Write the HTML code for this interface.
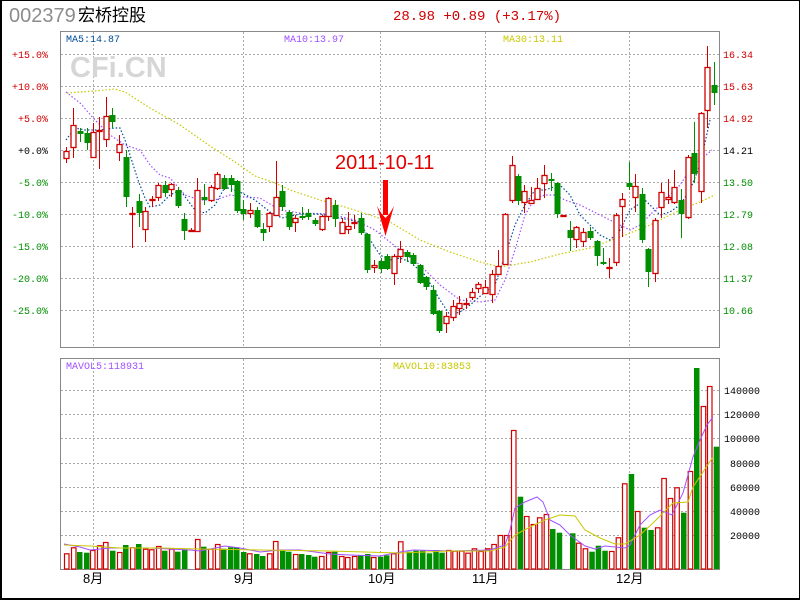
<!DOCTYPE html>
<html><head><meta charset="utf-8"><style>
html,body{margin:0;padding:0;background:#fff}
#w{position:relative;width:800px;height:600px;overflow:hidden}
</style></head><body><div id="w">
<svg id="s" width="800" height="600" xmlns="http://www.w3.org/2000/svg" font-family="Liberation Mono, monospace" font-size="10">
<rect x="0.5" y="0.5" width="799" height="599" fill="#fff" stroke="#000" stroke-width="1"/>
<line x1="1" y1="0" x2="1" y2="600" stroke="#000" stroke-width="2"/>
<line x1="0" y1="599" x2="800" y2="599" stroke="#000" stroke-width="2"/>
<text x="9" y="22" font-family="Liberation Sans, sans-serif" font-size="20" fill="#8c8c8c">002379</text>
<text x="78" y="21" font-family="Liberation Sans, 'Noto Sans CJK SC', sans-serif" font-size="17" fill="#000">宏桥控股</text>
<text x="393" y="20" font-size="14" fill="#d00000">28.98 +0.89 (+3.17%)</text>
<g id="grid" stroke="#aaa" stroke-dasharray="2,2" stroke-width="1"></g>
<text x="70" y="77" font-family="Liberation Sans, sans-serif" font-weight="bold" font-size="29" fill="#d6d6d6">CFi.CN</text>
<rect x="60.5" y="31.5" width="659" height="316" fill="none" stroke="#888"/>
<rect x="60.5" y="358.5" width="659" height="211" fill="none" stroke="#888"/>
<text x="66" y="42" fill="#004c99">MA5:14.87</text>
<text x="284" y="42" fill="#a050ff">MA10:13.97</text>
<text x="503" y="42" fill="#c8c800">MA30:13.11</text>
<text x="66" y="369" fill="#a050ff">MAVOL5:118931</text>
<text x="393" y="369" fill="#c8c800">MAVOL10:83853</text>
<g id="lab" text-anchor="end"></g>
<g id="rl"></g>
<g id="ma"></g>
<g id="cd"></g>
<g id="vb"></g>
<text x="335" y="169" font-family="Liberation Sans, sans-serif" font-size="20" fill="#e00000">2011-10-11</text>
<rect x="383" y="180" width="5" height="35" fill="#f00"/>
<polygon points="377,206 385.5,236 394,206 390,213 385.5,218 381,213" fill="#f00"/>
<g font-family="Liberation Sans, 'Noto Sans CJK SC', sans-serif" font-size="13" fill="#000">
<text x="83" y="583">8月</text><text x="234" y="583">9月</text><text x="368" y="583">10月</text><text x="472" y="583">11月</text><text x="616" y="583">12月</text></g>
</svg>
<script>
var NS="http://www.w3.org/2000/svg";
function el(p,t,a,tx){var e=document.createElementNS(NS,t);for(var k in a)e.setAttribute(k,a[k]);if(tx)e.textContent=tx;document.getElementById(p).appendChild(e);return e;}
[54,86,118,150,182,214,246,278,310].forEach(function(y){el('grid','line',{x1:61,x2:719,y1:y+.5,y2:y+.5});});
[93,243,380,485,629].forEach(function(x){el('grid','line',{x1:x+.5,x2:x+.5,y1:32,y2:347});el('grid','line',{x1:x+.5,x2:x+.5,y1:359,y2:569});});
[390,414,438,463,487,511,535].forEach(function(y){el('grid','line',{x1:61,x2:719,y1:y+.5,y2:y+.5});});
var L=[["+15.0%","#d00000"],["+10.0%","#d00000"],["+5.0%","#d00000"],["+0.0%","#000"],["-5.0%","#008f00"],["-10.0%","#008f00"],["-15.0%","#008f00"],["-20.0%","#008f00"],["-25.0%","#008f00"]];
var R=[["16.34","#d00000"],["15.63","#d00000"],["14.92","#d00000"],["14.21","#000"],["13.50","#008f00"],["12.79","#008f00"],["12.08","#008f00"],["11.37","#008f00"],["10.66","#008f00"]];
L.forEach(function(l,i){var y=54+i*32;el('lab','text',{x:48,y:y+4,fill:l[1]},l[0]);el('rl','text',{x:723,y:y+4,fill:R[i][1]},R[i][0]);});
["140000","120000","100000","80000","60000","40000","20000"].forEach(function(t,i){el('rl','text',{x:760,y:[390,414,438,463,487,511,535][i]+4,fill:'#000','text-anchor':'end'},t);});
function pl(pts,c,dash,w){el('ma','polyline',{points:pts.map(function(p){return p.join(',')}).join(' '),fill:'none',stroke:c,'stroke-width':w||1.2,'stroke-dasharray':dash||''});}
pl([[67,93],[95,91],[115,89],[125,92],[150,108],[180,125],[210,146],[235,162],[255,176],[275,183],[290,190],[320,200],[345,207],[370,215],[390,222],[420,240],[450,252],[480,262],[500,267],[530,262],[560,254],[590,248],[620,237],[650,225],[680,210],[700,202],[715,195]],'#c8c800','1.5,2');
pl([[66,92],[80,103],[95,120],[110,135],[125,145],[140,150],[150,165],[160,175],[170,178],[185,195],[200,200],[215,200],[230,195],[245,197],[260,198],[280,210],[300,213],[330,214],[355,220],[375,230],[400,250],[420,265],[440,285],[460,300],[480,302],[495,300],[505,280],[515,250],[525,215],[535,198],[545,195],[555,195],[565,200],[580,205],[600,215],[620,225],[630,230],[640,225],[650,215],[665,200],[680,185],[690,170],[700,160],[712,150]],'#a050ff','1.5,2');
pl([[66,140],[75,128],[85,130],[100,130],[115,128],[120,128],[125,140],[130,155],[138,180],[145,198],[150,207],[160,205],[170,195],[180,190],[195,210],[205,213],[215,205],[225,187],[240,192],[255,200],[270,212],[282,218],[300,214],[320,214],[340,218],[360,222],[367,235],[380,255],[390,260],[400,258],[410,262],[425,275],[440,300],[450,315],[460,312],[470,305],[485,292],[495,285],[500,270],[507,250],[515,225],[525,205],[535,190],[545,190],[560,185],[570,195],[580,215],[590,225],[600,235],[610,240],[620,230],[630,210],[645,200],[660,215],[670,212],[680,205],[690,190],[700,165],[710,120]],'#004c99','1.5,2');
var C=[[66,151,158,147,163,'r'],[73,125,147,108,158,'r'],[80,131,134,128,142,'g'],[87,133,143,128,150,'g'],[93,132,157,123,157,'r'],[99,130,131,117,169,'r'],[106,116,139,97,147,'r'],[112,115,122,108,128,'g'],[119,144,152,135,161,'r'],[126,157,197,150,207,'g'],[132,213,214,207,248,'r'],[139,201,213,194,227,'g'],[145,211,229,207,242,'r'],[152,199,200,196,207,'r'],[158,185,197,183,201,'r'],[165,185,193,181,197,'g'],[171,184,189,183,197,'r'],[178,190,206,187,208,'g'],[184,219,231,213,240,'g'],[191,230,231,228,232,'r'],[197,190,231,178,231,'r'],[204,197,200,184,205,'g'],[211,187,200,185,202,'r'],[217,174,188,172,190,'r'],[224,178,189,175,190,'g'],[231,178,185,175,192,'g'],[237,181,211,180,213,'g'],[243,209,214,200,220,'g'],[250,210,213,203,218,'r'],[257,210,227,207,228,'g'],[263,229,233,223,241,'g'],[269,213,226,212,232,'r'],[276,197,215,161,216,'r'],[282,191,207,185,211,'g'],[289,212,227,210,230,'g'],[295,218,222,215,232,'r'],[302,216,218,207,220,'g'],[308,213,217,209,220,'g'],[315,220,224,218,226,'g'],[322,216,229,215,231,'r'],[328,198,216,197,221,'r'],[335,205,219,200,227,'g'],[342,222,233,218,234,'r'],[348,226,229,212,234,'r'],[354,222,223,215,229,'r'],[361,218,233,213,235,'g'],[367,234,270,233,273,'g'],[374,265,267,260,273,'r'],[381,261,269,258,273,'g'],[387,256,269,254,270,'g'],[394,256,273,254,285,'r'],[400,249,256,241,263,'r'],[407,252,257,250,262,'g'],[413,255,264,253,265,'g'],[420,265,283,264,284,'g'],[426,277,287,276,290,'g'],[433,290,314,285,315,'g'],[439,311,331,310,333,'g'],[446,316,323,312,333,'r'],[453,306,317,300,321,'r'],[459,303,308,296,315,'r'],[466,303,304,298,309,'r'],[472,292,297,288,300,'r'],[478,284,288,282,293,'r'],[485,287,293,280,293,'r'],[492,274,294,270,303,'r'],[498,266,274,250,275,'r'],[505,214,264,213,265,'r'],[512,165,200,156,203,'r'],[518,176,201,174,205,'g'],[524,191,202,185,213,'r'],[531,200,203,187,204,'r'],[537,188,199,178,200,'r'],[544,175,183,165,198,'r'],[551,179,180,173,191,'g'],[557,183,214,182,218,'g'],[563,215,216,215,216,'r'],[570,230,238,221,251,'g'],[576,227,239,226,248,'r'],[583,232,241,228,247,'r'],[590,231,238,227,240,'g'],[597,241,256,240,266,'g'],[603,262,264,248,265,'g'],[609,267,268,258,278,'r'],[616,215,262,213,266,'r'],[622,199,206,193,237,'r'],[629,183,187,162,190,'g'],[635,186,197,174,212,'r'],[642,194,240,188,243,'g'],[648,249,272,248,287,'g'],[655,220,273,218,282,'r'],[661,192,207,183,218,'r'],[668,197,199,179,204,'r'],[674,187,202,170,204,'r'],[681,200,214,189,238,'g'],[688,157,217,155,219,'r'],[694,153,174,122,183,'g'],[701,113,191,112,203,'r'],[707,67,110,46,128,'r'],[714,85,93,62,105,'g']];
C.forEach(function(c){var col=c[5]=='r'?'#d00000':'#008f00';var x=c[0];
el('cd','line',{x1:x+.5,x2:x+.5,y1:c[3],y2:c[4],stroke:col});
if(c[5]=='r'){el('cd','rect',{x:x-2,y:c[1]+.5,width:5,height:Math.max(c[2]-c[1],1),fill:'#fff',stroke:col,'stroke-width':1.3});}
else el('cd','rect',{x:x-2.5,y:c[1],width:6,height:Math.max(c[2]-c[1],2),fill:col});});
var V=[[64,553.3,'r'],[71,547.3,'r'],[77,552,'g'],[84,552.7,'g'],[90,550,'r'],[97,545.3,'r'],[103,542,'r'],[110,550.7,'g'],[117,552,'r'],[123,545,'g'],[130,547.3,'r'],[136,544,'g'],[143,548.7,'r'],[149,549.3,'r'],[156,546,'r'],[162,550.7,'g'],[169,548.7,'r'],[175,551.7,'g'],[182,549.3,'g'],[195,539,'r'],[201,546.7,'g'],[208,548.7,'r'],[215,544,'r'],[221,548.7,'g'],[228,547.3,'g'],[234,547.3,'g'],[241,552,'g'],[247,553.3,'r'],[254,554,'g'],[260,556,'g'],[267,553.3,'r'],[273,541,'r'],[280,550.7,'g'],[286,551.7,'g'],[293,554,'r'],[299,554,'g'],[306,555,'g'],[312,556.7,'g'],[319,556,'r'],[326,552,'r'],[332,551.7,'g'],[339,556,'r'],[345,557,'r'],[352,556,'r'],[358,555.3,'g'],[365,554,'g'],[371,557,'r'],[378,556.7,'g'],[384,555.3,'g'],[391,553.3,'r'],[398,541.3,'r'],[406.7,551.7,'g'],[413.3,550.7,'g'],[420,550.7,'g'],[426.7,553.3,'g'],[433.3,550,'g'],[439.3,552.7,'g'],[446,550,'r'],[452.3,550.7,'r'],[459,550.7,'r'],[465.3,552.7,'r'],[471.7,548.3,'r'],[478.3,551,'r'],[485,548.3,'r'],[491.3,544,'r'],[497.7,535,'r'],[504,535,'r'],[511,430,'r'],[517.7,496.7,'g'],[524,516,'r'],[530.7,524,'r'],[537,517.3,'r'],[543.7,514,'r'],[550,529,'g'],[556.7,532.7,'g'],[570,533.3,'g'],[576,542.7,'r'],[582.7,548.3,'r'],[589.3,551.7,'g'],[595.7,545.7,'g'],[602.3,550.7,'g'],[609,551,'r'],[615.7,537.3,'r'],[622,483.3,'r'],[628.7,474,'g'],[635,511,'r'],[641.7,527.7,'g'],[648.3,530,'g'],[655,527.3,'r'],[661.3,478,'r'],[667.7,498,'r'],[674.3,487.3,'r'],[681,512.7,'g'],[687.7,471,'r'],[694,368,'g'],[700.7,406,'r'],[707,386,'r'],[713.7,446.7,'g']];
V.forEach(function(v){if(v[2]=='r')el('vb','rect',{x:v[0]+.5,y:v[1]+.5,width:4.5,height:569-v[1]-.5,fill:'#fff',stroke:'#d00000','stroke-width':1.2});else el('vb','rect',{x:v[0],y:v[1],width:5.5,height:569-v[1],fill:'#008f00'});});
function vl(pts,c){el('vb','polyline',{points:pts.map(function(p){return p.join(',')}).join(' '),fill:'none',stroke:c,'stroke-width':1});}
vl([[64,544],[80,547],[90,550],[110,548],[150,548],[190,550],[200,551],[215,548],[225,546],[240,548],[260,552],[280,550],[300,550],[330,554],[350,555],[380,556],[400,552],[413,550],[450,551],[490,550],[505,545],[510,530],[515,508],[525,502],[537,497],[543,502],[550,520],[560,525],[570,535],[585,546],[595,549],[605,546],[625,548],[630,545],[640,525],[650,515],[660,510],[672,515],[683,493],[693,457],[700,440],[707,425],[713,417]],'#a050ff');
vl([[64,545],[90,546],[120,548],[160,548],[200,549],[260,550],[330,551],[400,553],[450,551],[490,551],[505,547],[515,535],[530,527],[545,520],[560,515],[575,516],[585,530],[600,538],[615,544],[625,544],[640,535],[653,523],[673,503],[688,502],[693,487],[713,457]],'#c8c800');
</script>
</div></body></html>
